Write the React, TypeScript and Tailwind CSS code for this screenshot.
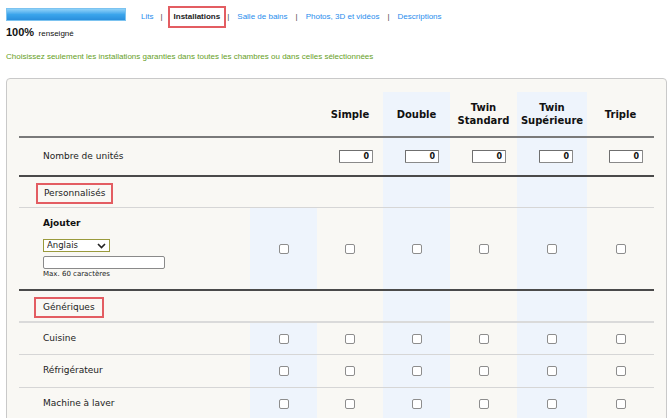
import React from "react";

const cols = "grid grid-cols-[231px_67px_66px_67px_67px_70px_67px]";
const tint = "bg-[#eef4fc]";

const rooms = [
  { name: ["Simple"], tinted: false },
  { name: ["Double"], tinted: true },
  { name: ["Twin", "Standard"], tinted: false },
  { name: ["Twin", "Supérieure"], tinted: true },
  { name: ["Triple"], tinted: false },
];

function Box() {
  return (
    <input
      type="checkbox"
      readOnly
      className="appearance-none w-[10px] h-[10px] border border-[#8d8d8d] rounded-[2px] bg-white"
    />
  );
}

function Line({ className }: { className: string }) {
  return <div className={`w-full ${className}`} />;
}

function CheckCells() {
  return (
    <>
      <div className={`flex items-center justify-center ${tint}`}>
        <Box />
      </div>
      {rooms.map((r, i) => (
        <div
          key={i}
          className={`flex items-center justify-center ${r.tinted ? tint : ""}`}
        >
          <Box />
        </div>
      ))}
    </>
  );
}

function CheckRow({ label, h }: { label: string; h: string }) {
  return (
    <div className={`${cols} ${h}`}>
      <div className="flex items-center pl-[24px] text-[9px] text-[#222]">
        {label}
      </div>
      <CheckCells />
    </div>
  );
}

function SectionRow({ label, box }: { label: string; box: string }) {
  return (
    <div className={`${cols} h-[30px]`}>
      <div className="col-span-2 flex items-start pt-[6px]">
        <span
          className={`border-2 border-[#e35d62] h-[21px] flex items-center text-[9px] text-[#222] ${box}`}
        >
          {label}
        </span>
      </div>
      {rooms.map((r, i) => (
        <div key={i} className={r.tinted ? tint : ""} />
      ))}
    </div>
  );
}

export default function App() {
  return (
    <div className="h-[418px] overflow-hidden bg-white pl-[6px] pt-[6px] font-['Liberation_Sans',Arial,sans-serif]">
      <div className="flex">
        <div className="w-[120px]">
          <div className="mt-[2px] h-[13px] border border-[#7cc3f0] bg-linear-to-b from-[#8fd2f8] via-[#3ba5ec] to-[#2a8fdd]" />
          <div className="mt-[3px] leading-[14px] text-[#111]">
            <span className="text-[11px] font-bold">100%</span>{" "}
            <span className="text-[8px]">renseigné</span>
          </div>
        </div>
        <nav className="ml-[15px] flex items-center h-[22px] text-[8px] text-[#1f8ded]">
          <span>Lits</span>
          <span className="ml-[7px] text-[#444]">|</span>
          <span className="ml-[5px] h-[22px] px-[4px] flex items-center border-2 border-[#e35d62] font-bold text-[#222]">
            Installations
          </span>
          <span className="ml-[1px] text-[#444]">|</span>
          <span className="ml-[8px]">Salle de bains</span>
          <span className="ml-[8px] text-[#444]">|</span>
          <span className="ml-[8px]">Photos, 3D et vidéos</span>
          <span className="ml-[8px] text-[#444]">|</span>
          <span className="ml-[8px]">Descriptions</span>
        </nav>
      </div>

      <p className="mt-[11px] text-[8px] leading-[10px] text-[#66a01e]">
        Choisissez seulement les installations garanties dans toutes les
        chambres ou dans celles sélectionnées
      </p>

      <div className="mt-[16px] w-[661px] border border-[#c9c9c9] rounded-[4px] bg-[#f9f8f4] pl-[12px] pt-[13px] pb-[20px] font-['DejaVu_Sans',Verdana,sans-serif]">
        <div className="w-[635px]">
          <div className={`${cols} h-[44px]`}>
            <div className="col-span-2" />
            {rooms.map((r, i) => (
              <div
                key={i}
                className={`flex flex-col items-center justify-center text-center text-[10px] font-bold leading-[13px] text-[#111] ${r.tinted ? tint : ""}`}
              >
                {r.name.map((n) => (
                  <span key={n}>{n}</span>
                ))}
              </div>
            ))}
          </div>
          <Line className="h-[2px] bg-[#7a7a7a]" />

          <div className={`${cols} h-[37px]`}>
            <div className="flex items-center pl-[24px] text-[9px] text-[#222]">
              Nombre de unités
            </div>
            <div />
            {rooms.map((r, i) => (
              <div
                key={i}
                className={`flex items-center pl-[22px] ${r.tinted ? tint : ""}`}
              >
                <input
                  readOnly
                  value="0"
                  className="w-[34px] h-[13px] border border-[#8a8a8a] border-t-[#6f6f6f] border-l-[#6f6f6f] rounded-[1px] bg-white pr-[3px] text-right text-[8px] font-bold text-[#111] outline-none"
                />
              </div>
            ))}
          </div>
          <Line className="h-[2px] bg-[#4a4a4a]" />

          <SectionRow label="Personnalisés" box="ml-[17px] px-[6px]" />
          <Line className="h-[1px] bg-[#d6d6d6]" />

          <div className={`${cols} h-[81px]`}>
            <div className="pl-[24px] pt-[9px]">
              <div className="text-[9px] font-bold leading-[12px] text-[#111]">
                Ajouter
              </div>
              <div className="relative mt-[10px] w-[67px] h-[13px]">
                <select className="block appearance-none w-[67px] h-[13px] border border-[#9a9a3c] bg-white pl-[3px] py-0 text-[8.5px] leading-[11px] text-[#222] outline-none">
                  <option>Anglais</option>
                </select>
                <svg
                  className="absolute right-[4px] top-[4px] pointer-events-none"
                  width="9"
                  height="6"
                  viewBox="0 0 9 6"
                >
                  <path
                    d="M1 1l3.5 3.5L8 1"
                    fill="none"
                    stroke="#222"
                    strokeWidth="1.6"
                  />
                </svg>
              </div>
              <input
                readOnly
                className="block mt-[4px] w-[122px] h-[13px] border border-[#8a8a8a] rounded-[2px] bg-white outline-none"
              />
              <div className="mt-[1px] text-[7px] leading-[9px] text-[#222]">
                Max. 60 caractères
              </div>
            </div>
            <CheckCells />
          </div>
          <Line className="h-[2px] bg-[#4a4a4a]" />

          <SectionRow label="Génériques" box="ml-[15px] px-[7px] h-[20px]" />
          <Line className="h-[2px] bg-[#dadada]" />

          <CheckRow label="Cuisine" h="h-[31px]" />
          <Line className="h-[1px] bg-[#d6d6d6]" />
          <CheckRow label="Réfrigérateur" h="h-[32px]" />
          <Line className="h-[1px] bg-[#d6d6d6]" />
          <CheckRow label="Machine à laver" h="h-[31px]" />
          <Line className="h-[1px] bg-[#d6d6d6]" />
        </div>
      </div>
    </div>
  );
}
